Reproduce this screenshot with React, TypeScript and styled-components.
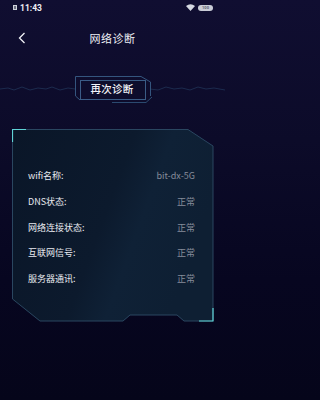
import { styled, createGlobalStyle } from 'styled-components'

const GlobalStyle = createGlobalStyle`
	html, body {
		margin: 0;
		padding: 0;
		background: linear-gradient(180deg, #100e31 0%, #0c0b29 35%, #070620 70%, #05051a 100%);
		min-height: 100vh;
	}
	* {
		box-sizing: border-box;
	}
`

const StyledScreen = styled.div`
	width: 225px;
	height: 400px;
	overflow: hidden;
	display: flex;
	flex-direction: column;
	background: linear-gradient(180deg, #100e31 0%, #0c0b29 35%, #070620 70%, #05051a 100%);
	font-family: 'Noto Sans CJK SC', 'Noto Sans', sans-serif;
	color: #eef0f5;
`
const StyledStatusBar = styled.div`
	height: 15px;
	padding: 0 12px 0 13px;
	display: flex;
	align-items: center;
	justify-content: space-between;
	font-family: Roboto, 'Noto Sans', sans-serif;
	font-size: 8.5px;
	font-weight: 700;
`
const StyledClock = styled.div`
	display: flex;
	align-items: center;
	gap: 3px;
`
const StyledSimIcon = styled.span`
	width: 4px;
	height: 5px;
	border: 1px solid #cfd2dc;
	background: #6b6f80;
`
const StyledStatusIcons = styled.div`
	display: flex;
	align-items: center;
	gap: 3px;
`
const StyledBattery = styled.span`
	width: 15px;
	height: 6px;
	border-radius: 3px;
	background: #c9ccd6;
	color: #5a5e6e;
	font-size: 4px;
	line-height: 6px;
	text-align: center;
`
const StyledHeader = styled.header`
	position: relative;
	height: 30px;
	margin-top: 8px;
	display: flex;
	align-items: center;
	justify-content: center;
`
const StyledBack = styled.button`
	position: absolute;
	left: 14px;
	top: 7px;
	width: 16px;
	height: 16px;
	padding: 0;
	border: none;
	background: none;
	display: flex;
	align-items: center;
	justify-content: center;
`
const StyledTitle = styled.h1`
	margin: 0;
	font-size: 11px;
	font-weight: 400;
	letter-spacing: 0.5px;
`
const StyledActionZone = styled.div`
	position: relative;
	height: 30px;
	margin-top: 22px;
	display: flex;
	justify-content: center;
`
const StyledDecor = styled.svg`
	position: absolute;
	left: 0;
	top: 0;
	pointer-events: none;
`
const StyledRetry = styled.button`
	position: relative;
	margin: 4px 0 0 -1px;
	width: 66px;
	height: 19px;
	padding: 0;
	border: none;
	background: transparent;
	color: #f2f3f7;
	font-family: 'Noto Sans CJK SC', sans-serif;
	font-size: 10.5px;
	font-weight: 500;
	letter-spacing: 0.3px;
`
const StyledPanel = styled.section`
	position: relative;
	width: 202px;
	height: 194px;
	margin: 24px 0 0 12px;
	padding: 34px 19px 0 16px;
	display: flex;
	flex-direction: column;
`
const StyledRow = styled.div`
	position: relative;
	height: 25.7px;
	display: flex;
	align-items: center;
	justify-content: space-between;
	font-size: 9px;
`
const StyledLabel = styled.span`
	color: #e8eaf0;
`
const StyledValue = styled.span`
	color: #868c9a;
	font-family: 'Noto Sans CJK SC', 'Liberation Sans', sans-serif;
`

const rows = [
	{ label: 'wifi名称:', value: 'bit-dx-5G' },
	{ label: 'DNS状态:', value: '正常' },
	{ label: '网络连接状态:', value: '正常' },
	{ label: '互联网信号:', value: '正常' },
	{ label: '服务器通讯:', value: '正常' },
]

function PanelFrame() {
	const outline =
		'M0.5,0.5 L176,0.5 L201,17 L201,192 L172,192 L165,186 L118,186 L111,192 L28,192 L0.5,170 Z'
	return (
		<StyledDecor width="202" height="194" viewBox="0 0 202 194">
			<defs>
				<linearGradient id="pf" x1="0" y1="0" x2="1" y2="0.35">
					<stop offset="0" stopColor="#0a1628" />
					<stop offset="0.55" stopColor="#0c1a2d" />
					<stop offset="0.72" stopColor="#0f2136" />
					<stop offset="1" stopColor="#0e1f33" />
				</linearGradient>
			</defs>
			<path d={outline} fill="url(#pf)" stroke="#2a4660" strokeWidth="1" />
			<polyline points="0.5,13 0.5,0.5 14,0.5" fill="none" stroke="#5fd3d6" strokeWidth="1.2" />
			<polyline points="201,179 201,192 187,192" fill="none" stroke="#5fd3d6" strokeWidth="1.2" />
		</StyledDecor>
	)
}

function RetryFrame() {
	return (
		<StyledDecor width="225" height="30" viewBox="0 0 225 30">
			<polyline
				points="0,14 8,13 14,15 22,12 30,15 38,13 46,14 52,12 60,15 68,13 75,14"
				fill="none"
				stroke="#1c2b4e"
				strokeWidth="1"
			/>
			<polyline
				points="150,14 158,15 166,12 174,14 182,13 190,15 198,12 206,14 214,13 225,15"
				fill="none"
				stroke="#1c2b4e"
				strokeWidth="1"
			/>
			<polyline
				points="75.5,21 75.5,1.5 141,1.5 150.5,7 150.5,21"
				fill="none"
				stroke="#34557e"
				strokeWidth="1"
			/>
			<rect x="80.5" y="5.5" width="65" height="19" fill="#0d0d2c" stroke="#3a5c86" strokeWidth="1" />
			<polyline points="75.5,21 80,25" fill="none" stroke="#34557e" strokeWidth="1" />
			<polyline points="112,27.5 146,27.5 152,22" fill="none" stroke="#2b4a70" strokeWidth="1" />
		</StyledDecor>
	)
}

export default function App() {
	return (
		<>
			<GlobalStyle />
			<StyledScreen>
				<StyledStatusBar>
					<StyledClock>
						<StyledSimIcon />
						<span>11:43</span>
					</StyledClock>
					<StyledStatusIcons>
						<svg width="9" height="7" viewBox="0 0 9 7">
							<path d="M0,2 Q4.5,-1.5 9,2 L4.5,7 Z" fill="#d6d9e2" />
						</svg>
						<StyledBattery>100</StyledBattery>
					</StyledStatusIcons>
				</StyledStatusBar>

				<StyledHeader>
					<StyledBack aria-label="back">
						<svg width="8" height="12" viewBox="0 0 8 12">
							<polyline points="6.5,1 1.5,6 6.5,11" fill="none" stroke="#f0f2f6" strokeWidth="1.3" />
						</svg>
					</StyledBack>
					<StyledTitle>网络诊断</StyledTitle>
				</StyledHeader>

				<StyledActionZone>
					<RetryFrame />
					<StyledRetry>再次诊断</StyledRetry>
				</StyledActionZone>

				<StyledPanel>
					<PanelFrame />
					{rows.map((row) => (
						<StyledRow key={row.label}>
							<StyledLabel>{row.label}</StyledLabel>
							<StyledValue>{row.value}</StyledValue>
						</StyledRow>
					))}
				</StyledPanel>
			</StyledScreen>
		</>
	)
}
